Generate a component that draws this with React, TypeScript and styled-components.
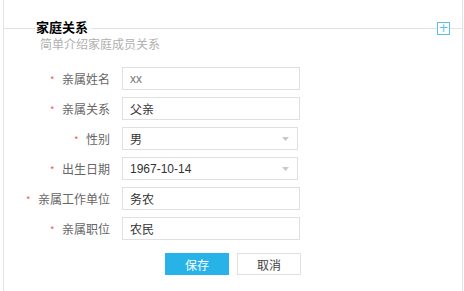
import styled, { createGlobalStyle } from 'styled-components'

const GlobalStyle = createGlobalStyle`
  html, body {
    margin: 0;
    padding: 0;
    background: #fff;
  }
  body {
    font-family: "Liberation Sans", "Noto Sans CJK SC", sans-serif;
  }
`

type Field = {
  label: string
  value: string
  kind?: 'input' | 'select'
  muted?: boolean
}

const fields: Field[] = [
  { label: '亲属姓名', value: 'xx', muted: true },
  { label: '亲属关系', value: '父亲' },
  { label: '性别', value: '男', kind: 'select' },
  { label: '出生日期', value: '1967-10-14', kind: 'select' },
  { label: '亲属工作单位', value: '务农' },
  { label: '亲属职位', value: '农民' },
]

const Caret = () => (
  <svg width='7' height='4' viewBox='0 0 7 4'>
    <path d='M0 0 L7 0 L3.5 4 Z' fill='#c8c8c8' />
  </svg>
)

export default function App() {
  return (
    <>
      <GlobalStyle />
      <Panel>
        <Header>
          <LineStub />
          <Title>家庭关系</Title>
          <LineFill />
          <ExpandButton>+</ExpandButton>
          <LineEnd />
        </Header>
        <Subtitle>简单介绍家庭成员关系</Subtitle>
        <Form>
          {fields.map((f) => (
            <Row key={f.label}>
              <Label>
                <Required>*</Required>
                {f.label}
              </Label>
              {f.kind === 'select' ? (
                <SelectBox>
                  <span>{f.value}</span>
                  <Caret />
                </SelectBox>
              ) : (
                <TextInput readOnly value={f.value} $muted={f.muted} />
              )}
            </Row>
          ))}
          <Actions>
            <Button $primary>保存</Button>
            <Button>取消</Button>
          </Actions>
        </Form>
      </Panel>
    </>
  )
}

const Panel = styled.div`
  margin-left: 3px;
  width: 460px;
  min-height: 291px;
  box-sizing: border-box;
  border-left: 1px solid #e3e3e3;
  border-right: 1px solid #e3e3e3;
  display: flex;
  flex-direction: column;
`

const Header = styled.div`
  margin-top: 21px;
  height: 14px;
  display: flex;
  align-items: center;
`

const Line = styled.div`
  height: 1px;
  background: #e3e3e3;
`

const LineStub = styled(Line)`
  width: 31px;
`

const LineFill = styled(Line)`
  flex: 1;
`

const LineEnd = styled(Line)`
  width: 12px;
`

const Title = styled.div`
  padding: 0 3px 0 1px;
  font-size: 13px;
  line-height: 14px;
  font-weight: bold;
  color: #000;
`

const ExpandButton = styled.div`
  width: 13px;
  height: 13px;
  box-sizing: border-box;
  border: 1px solid #5bbfe9;
  color: #5bbfe9;
  font-size: 12px;
  line-height: 10px;
  text-align: center;
  font-family: "DejaVu Sans", sans-serif;
`

const Subtitle = styled.div`
  margin-top: 2px;
  padding-left: 36px;
  font-size: 12px;
  line-height: 16px;
  color: #b0b0b0;
`

const Form = styled.div`
  margin-top: 14px;
  display: flex;
  flex-direction: column;
  gap: 7px;
`

const Row = styled.div`
  display: flex;
  align-items: center;
  gap: 12px;
`

const Label = styled.div`
  width: 106px;
  display: flex;
  justify-content: flex-end;
  align-items: center;
  font-size: 12px;
  color: #666;
`

const Required = styled.span`
  color: #e5533c;
  font-size: 9px;
  margin-right: 8px;
`

const TextInput = styled.input<{ $muted?: boolean }>`
  width: 178px;
  height: 23px;
  box-sizing: border-box;
  border: 1px solid #e0e0e0;
  padding: 0 7px;
  margin: 0;
  font-family: inherit;
  font-size: 12px;
  color: ${(p) => (p.$muted ? '#777' : '#333')};
  outline: none;
`

const SelectBox = styled.div`
  width: 176px;
  height: 23px;
  box-sizing: border-box;
  border: 1px solid #e0e0e0;
  padding: 0 8px 0 7px;
  display: flex;
  align-items: center;
  justify-content: space-between;
  font-size: 12px;
  color: #333;
`

const Actions = styled.div`
  margin-top: 6px;
  padding-left: 161px;
  display: flex;
  gap: 8px;
`

const Button = styled.div<{ $primary?: boolean }>`
  width: 64px;
  height: 22px;
  box-sizing: border-box;
  display: flex;
  align-items: center;
  justify-content: center;
  font-size: 12px;
  background: ${(p) => (p.$primary ? '#27b3e8' : '#fff')};
  color: ${(p) => (p.$primary ? '#fff' : '#444')};
  border: 1px solid ${(p) => (p.$primary ? '#27b3e8' : '#e0e0e0')};
`
